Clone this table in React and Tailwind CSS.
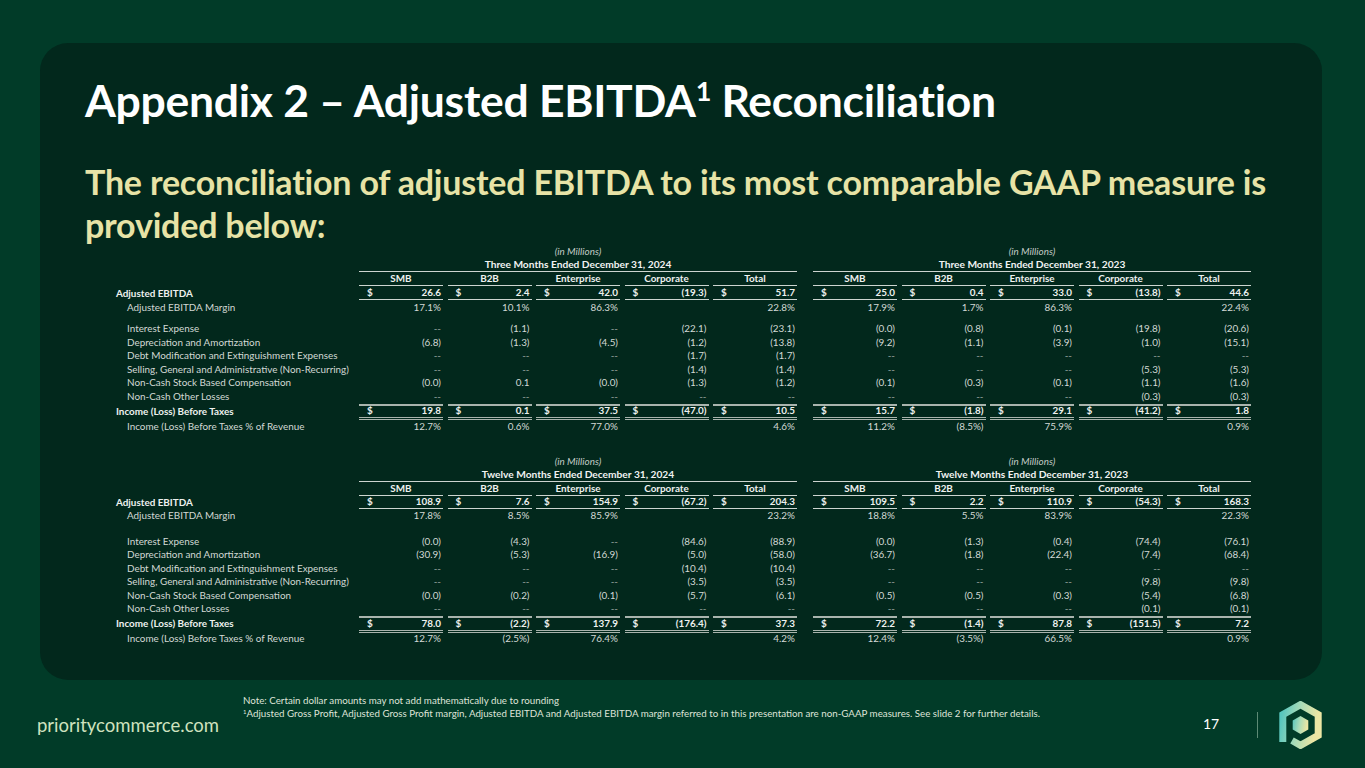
import React from "react";

const three = {
  left: {
    title: "Three Months Ended December 31, 2024",
    rows: [
      ["26.6", "2.4", "42.0", "(19.3)", "51.7"],
      ["17.1%", "10.1%", "86.3%", "", "22.8%"],
      ["--", "(1.1)", "--", "(22.1)", "(23.1)"],
      ["(6.8)", "(1.3)", "(4.5)", "(1.2)", "(13.8)"],
      ["--", "--", "--", "(1.7)", "(1.7)"],
      ["--", "--", "--", "(1.4)", "(1.4)"],
      ["(0.0)", "0.1", "(0.0)", "(1.3)", "(1.2)"],
      ["--", "--", "--", "--", "--"],
      ["19.8", "0.1", "37.5", "(47.0)", "10.5"],
      ["12.7%", "0.6%", "77.0%", "", "4.6%"],
    ],
  },
  right: {
    title: "Three Months Ended December 31, 2023",
    rows: [
      ["25.0", "0.4", "33.0", "(13.8)", "44.6"],
      ["17.9%", "1.7%", "86.3%", "", "22.4%"],
      ["(0.0)", "(0.8)", "(0.1)", "(19.8)", "(20.6)"],
      ["(9.2)", "(1.1)", "(3.9)", "(1.0)", "(15.1)"],
      ["--", "--", "--", "--", "--"],
      ["--", "--", "--", "(5.3)", "(5.3)"],
      ["(0.1)", "(0.3)", "(0.1)", "(1.1)", "(1.6)"],
      ["--", "--", "--", "(0.3)", "(0.3)"],
      ["15.7", "(1.8)", "29.1", "(41.2)", "1.8"],
      ["11.2%", "(8.5%)", "75.9%", "", "0.9%"],
    ],
  },
};

const twelve = {
  left: {
    title: "Twelve Months Ended December 31, 2024",
    rows: [
      ["108.9", "7.6", "154.9", "(67.2)", "204.3"],
      ["17.8%", "8.5%", "85.9%", "", "23.2%"],
      ["(0.0)", "(4.3)", "--", "(84.6)", "(88.9)"],
      ["(30.9)", "(5.3)", "(16.9)", "(5.0)", "(58.0)"],
      ["--", "--", "--", "(10.4)", "(10.4)"],
      ["--", "--", "--", "(3.5)", "(3.5)"],
      ["(0.0)", "(0.2)", "(0.1)", "(5.7)", "(6.1)"],
      ["--", "--", "--", "--", "--"],
      ["78.0", "(2.2)", "137.9", "(176.4)", "37.3"],
      ["12.7%", "(2.5%)", "76.4%", "", "4.2%"],
    ],
  },
  right: {
    title: "Twelve Months Ended December 31, 2023",
    rows: [
      ["109.5", "2.2", "110.9", "(54.3)", "168.3"],
      ["18.8%", "5.5%", "83.9%", "", "22.3%"],
      ["(0.0)", "(1.3)", "(0.4)", "(74.4)", "(76.1)"],
      ["(36.7)", "(1.8)", "(22.4)", "(7.4)", "(68.4)"],
      ["--", "--", "--", "--", "--"],
      ["--", "--", "--", "(9.8)", "(9.8)"],
      ["(0.5)", "(0.5)", "(0.3)", "(5.4)", "(6.8)"],
      ["--", "--", "--", "(0.1)", "(0.1)"],
      ["72.2", "(1.4)", "87.8", "(151.5)", "7.2"],
      ["12.4%", "(3.5%)", "66.5%", "", "0.9%"],
    ],
  },
};

const labels = [
  ["Adjusted EBITDA", true],
  ["Adjusted EBITDA Margin", false],
  ["Interest Expense", false],
  ["Depreciation and Amortization", false],
  ["Debt Modification and Extinguishment Expenses", false],
  ["Selling, General and Administrative (Non-Recurring)", false],
  ["Non-Cash Stock Based Compensation", false],
  ["Non-Cash Other Losses", false],
  ["Income (Loss) Before Taxes", true],
  ["Income (Loss) Before Taxes % of Revenue", false],
];

const cols = ["SMB", "B2B", "Enterprise", "Corporate", "Total"];

const Group = ({ children }) => (
  <div className="grid grid-cols-[repeat(5,84px)] gap-x-[4.5px]">{children}</div>
);

const Cell = ({ v, dollar, cls = "" }) => (
  <div className={`flex items-center justify-between pl-[8px] pr-[2px] ${cls}`}>
    <span>{dollar ? "$" : ""}</span>
    <span className={v === "--" ? "text-[#9aa59f]" : ""}>{v}</span>
  </div>
);

const Line = ({ label, bold, indent, h, left, right, dollar, cls = "" }) => (
  <div className="flex">
    <div
      className={`w-[243px] flex items-center whitespace-nowrap ${h} ${indent ? "pl-[11px]" : ""} ${
        bold ? "font-bold text-[#eef1ef]" : ""
      }`}
    >
      {label}
    </div>
    <Group>
      {left.map((v, i) => (
        <Cell key={i} v={v} dollar={dollar} cls={`${h} ${cls}`} />
      ))}
    </Group>
    <div className="w-[16px]" />
    <Group>
      {right.map((v, i) => (
        <Cell key={i} v={v} dollar={dollar} cls={`${h} ${cls}`} />
      ))}
    </Group>
  </div>
);

const Table = ({ data, periodH, adjH, spacer }) => {
  const { left, right } = data;
  const row = (i) => (
    <Line
      key={i}
      label={labels[i][0]}
      bold={labels[i][1]}
      indent={!labels[i][1]}
      h="h-[13.5px]"
      left={left.rows[i]}
      right={right.rows[i]}
    />
  );
  return (
    <div className="text-[9.9px] leading-none text-[#d3d9d5]">
      <div className="flex">
        <div className="w-[243px]" />
        {[left, right].map((g, gi) => (
          <div key={gi} className={`w-[438px] ${gi ? "ml-[16px]" : ""}`}>
            <div className="h-[13px] flex items-center justify-center italic text-[#c3cbc6]">(in Millions)</div>
            <div
              className={`${periodH} flex items-center justify-center font-bold text-[10.2px] text-[#f1f3f2] border-b border-[#cdd5d0]`}
            >
              {g.title}
            </div>
            <div className="mt-[1px]">
              <Group>
                {cols.map((c) => (
                  <div
                    key={c}
                    className="h-[13px] flex items-center justify-center font-bold text-[#eef1ef] border-b-[1.5px] border-[#cdd5d0]"
                  >
                    {c}
                  </div>
                ))}
              </Group>
            </div>
          </div>
        ))}
      </div>
      <div className="mt-[1px]">
        <Line
          label={labels[0][0]}
          bold
          h={adjH}
          left={left.rows[0]}
          right={right.rows[0]}
          dollar
          cls="font-bold text-[#eef1ef] border-b border-[#cdd5d0]"
        />
      </div>
      <div className="mt-[1px]">{row(1)}</div>
      <div className={spacer} />
      {[2, 3, 4, 5, 6, 7].map((i) => row(i))}
      <Line
        label={labels[8][0]}
        bold
        h="h-[16.5px]"
        left={left.rows[8]}
        right={right.rows[8]}
        dollar
        cls="font-bold text-[#eef1ef] border-t-2 border-b-[3px] border-double border-[#a9b4ad]"
      />
      {row(9)}
    </div>
  );
};

const Logo = () => (
  <svg width="45" height="48" viewBox="0 0 45 48">
    <defs>
      <linearGradient id="pg" x1="0" y1="0" x2="1" y2="0.2">
        <stop offset="0" stopColor="#56c6be" />
        <stop offset="0.5" stopColor="#a9dcb8" />
        <stop offset="1" stopColor="#ece6a4" />
      </linearGradient>
    </defs>
    <polyline
      points="4.8,41 4.8,13.6 22.5,3.6 40.2,13.6 40.2,34.4 22.5,44.4 14,39.5"
      fill="none"
      stroke="url(#pg)"
      strokeWidth="7"
      strokeLinejoin="miter"
    />
    <polygon points="22.5,15 30.3,19.5 30.3,28.5 22.5,33 14.7,28.5 14.7,19.5" fill="url(#pg)" />
  </svg>
);

export default function App() {
  return (
    <div className="w-[1365px] h-[768px] bg-[#013b28] font-[Lato,sans-serif] overflow-hidden">
      <div className="pt-[43px] pl-[40px]">
        <div className="w-[1282px] h-[637px] rounded-[28px] bg-[#02281c] pl-[45px] pt-[32px]">
          <h1 className="text-[44.5px] leading-[50px] font-bold text-white tracking-[-0.3px] whitespace-nowrap">
            Appendix 2 – Adjusted EBITDA
            <span className="text-[27px] relative -top-[16px]">1</span> Reconciliation
          </h1>
          <p className="mt-[28px] text-[34px] leading-[43px] font-bold text-[#e7e3a6] tracking-[-0.2px] whitespace-nowrap">
            The reconciliation of adjusted EBITDA to its most comparable GAAP measure is
            <br />
            provided below:
          </p>
          <div className="-mt-[1px] ml-[31px]">
            <Table data={three} periodH="h-[14px]" adjH="h-[13px]" spacer="h-[8px]" />
            <div className="mt-[22px]">
              <Table data={twelve} periodH="h-[13px]" adjH="h-[12px]" spacer="h-[12px]" />
            </div>
          </div>
        </div>
      </div>
      <div className="flex items-start">
        <div className="w-[243px] pl-[37px] pt-[34px] text-[18.5px] leading-[22px] text-[#cfe2bf] whitespace-nowrap">
          prioritycommerce.com
        </div>
        <div className="w-[960px] pt-[14px] text-[9.75px] leading-[13px] text-[#dfe3d8]">
          <div>Note: Certain dollar amounts may not add mathematically due to rounding</div>
          <div>
            <span className="text-[6px] relative -top-[3px]">1</span>Adjusted Gross Profit, Adjusted Gross Profit
            margin, Adjusted EBITDA and Adjusted EBITDA margin referred to in this presentation are non-GAAP measures.
            See slide 2 for further details.
          </div>
        </div>
        <div className="pt-[35px] text-[14px] leading-[18px] text-white">17</div>
        <div className="ml-[38px] mt-[32px] w-px h-[26px] bg-[#5d8a75]" />
        <div className="ml-[20px] mt-[21px]">
          <Logo />
        </div>
      </div>
    </div>
  );
}
